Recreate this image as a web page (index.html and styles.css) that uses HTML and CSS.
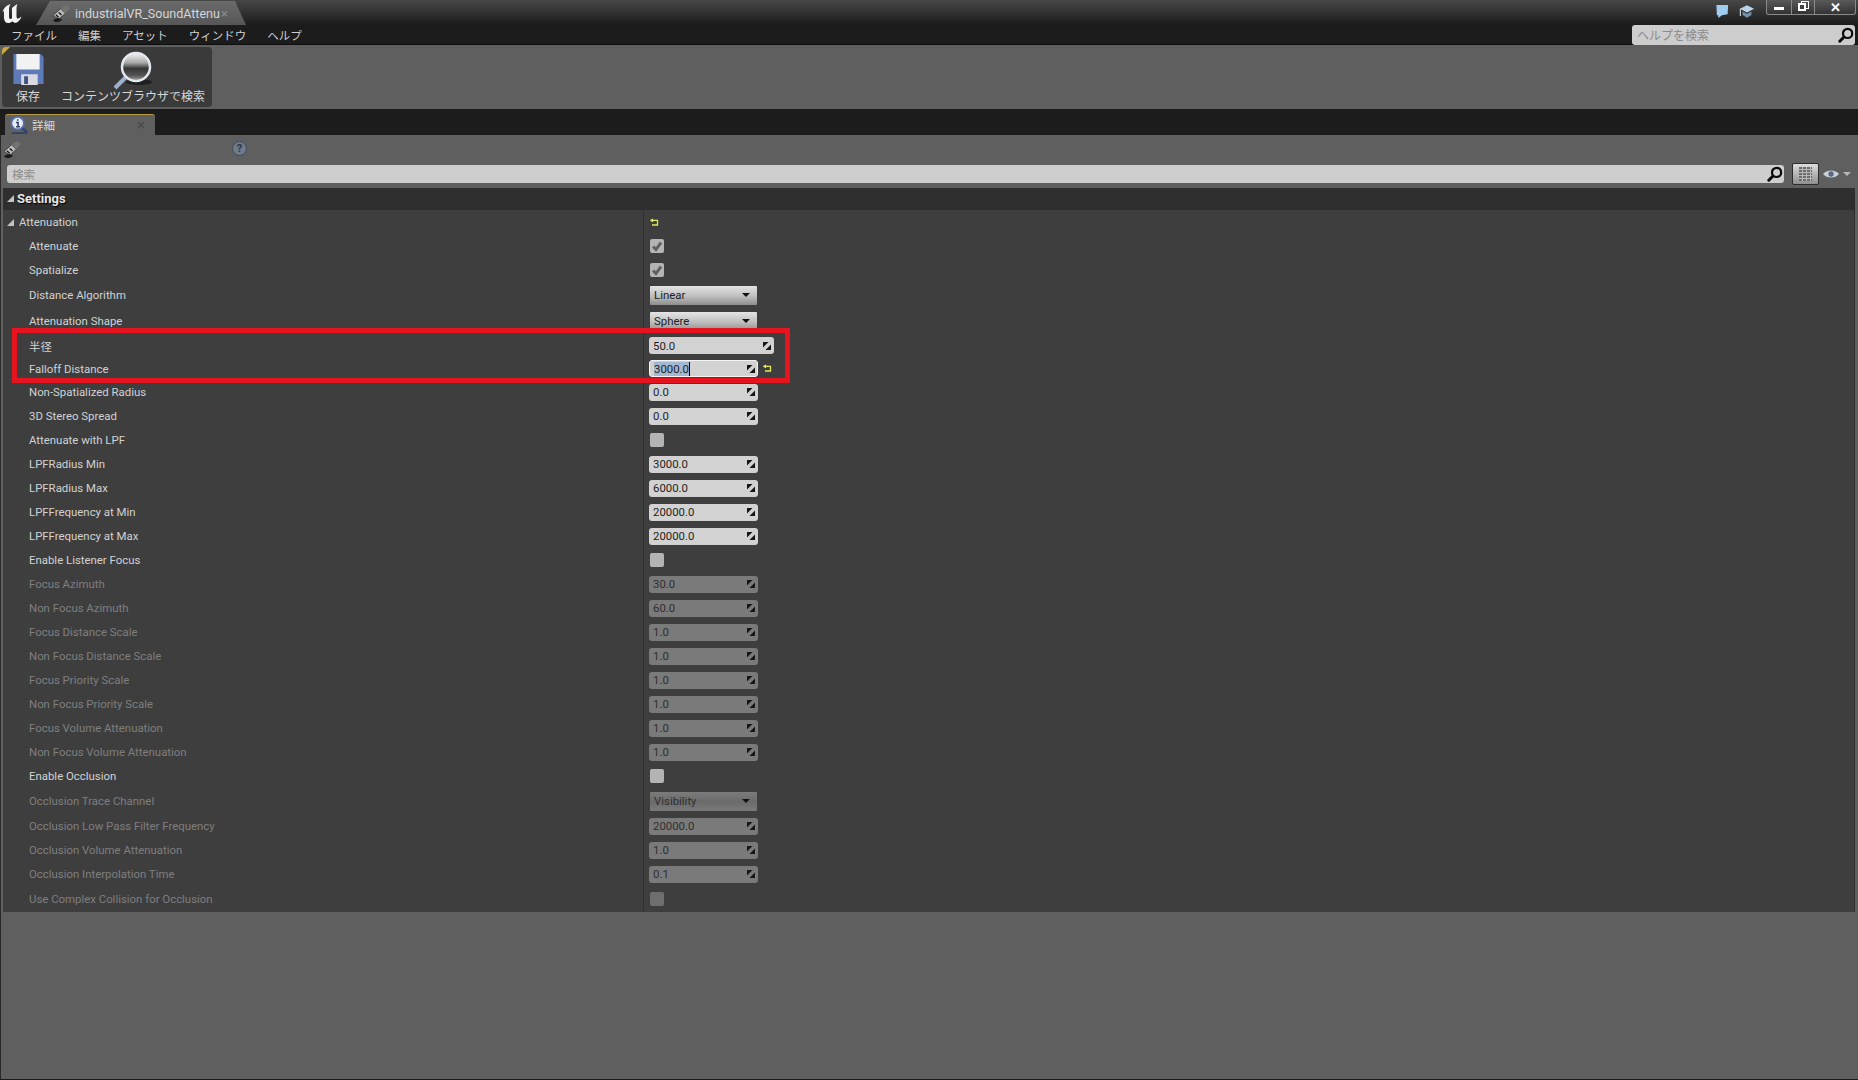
FILE: index.html
```html
<!DOCTYPE html>
<html lang="ja">
<head>
<meta charset="utf-8">
<title>industrialVR_SoundAttenuation</title>
<link rel="stylesheet" href="styles.css">
</head>
<body>
<svg class="defs" width="0" height="0" aria-hidden="true">
  <defs>
    <linearGradient id="glass" x1="0" y1="0" x2="0" y2="1"><stop offset="0" stop-color="#f4f4f4"/><stop offset=".35" stop-color="#a8a8a8"/><stop offset=".55" stop-color="#353535"/><stop offset=".8" stop-color="#555"/><stop offset="1" stop-color="#a4a4a4"/></linearGradient>
    <symbol id="i-arrows" viewBox="0 0 9 9"><path d="M0 0H6.200L0 6.200ZM9 9H2.800L9 2.800Z" fill="#161616"/></symbol>
    <symbol id="i-reset" viewBox="0 0 9 8"><path d="M3 1 1 2.400 3 3.800M1.500 2.400H7.500V7H2" fill="none" stroke="#e6e65a" stroke-width="1.300"/></symbol>
    <symbol id="i-tick" viewBox="0 0 14 14"><path d="M3 7.500 6 10.500 11 3.500" fill="none" stroke="#5f5f5f" stroke-width="3"/></symbol>
    <symbol id="i-lens" viewBox="0 0 16 16"><circle cx="9.600" cy="6.400" r="4.600" fill="none" stroke="#0b0b0b" stroke-width="2.200"/><path d="M6 10 1.800 14.200" stroke="#0b0b0b" stroke-width="3" stroke-linecap="round"/></symbol>
    <symbol id="i-sound" viewBox="0 0 18 18"><path d="M0 11 8 4 13 9 6 15z" fill="#bdbdbd" stroke="#2a2a2a" stroke-width=".8"/><path d="M8 4 14 0 18 3 13 9z" fill="#737373"/><path d="M3 10.500 6 13M6 8 9 10.500" stroke="#1c1c1c" stroke-width="1.500"/><path d="M0 16 5 13.500 10 15.500 6 18H2z" fill="#1a1a1a"/></symbol>
  </defs>
</svg>
<div class="window">
  <header class="titlebar">
    <svg class="logo" viewBox="0 0 22 22" aria-hidden="true"><path d="M1 10C2 6 5 3.500 9 2 7.500 4.500 7.500 6 7.500 8V15C7.500 17 9 17.500 10.500 16.500V6C12 4.500 13.500 3.500 16 2 15 4 15 6 15 8V14C15 16 15.500 17.500 18 16L20 14.500C19 18 16 21 13.500 21 12.500 20 11.500 19.500 10.500 19.500 9 20.500 8 21 6.500 21 4 21 2.500 19 2.500 15.500V10C2.500 9 1.500 9 1 10Z" fill="#f4f4f4"/></svg>
    <div class="doc-tab">
      <svg class="tab-icon"><use href="#i-sound"/></svg>
      <span class="doc-name">industrialVR_SoundAttenu</span>
      <span class="close-x">×</span>
    </div>
    <div class="title-right">
      <svg class="hint-icon" viewBox="0 0 16 16" aria-hidden="true"><path d="M2 1H14.500L14 11 8 12 4 15V12H2.500z" fill="#9fcdef"/></svg>
      <svg class="hint-icon" viewBox="0 0 18 16" aria-hidden="true"><path d="M1 5 9 1 17 5 9 9z" fill="#b9d3e8"/><path d="M4 8V12L9 15 14 12V8L9 10.500z" fill="#7391ab"/><path d="M1.500 5V13" stroke="#ddd" stroke-width="1.200"/></svg>
      <div class="win-buttons">
        <span class="win-btn win-min"><span class="min-bar"></span></span>
        <span class="win-btn win-max"><span class="max-back"></span><span class="max-front"></span></span>
        <span class="win-btn win-close">✕</span>
      </div>
    </div>
  </header>

  <nav class="menubar">
    <span class="menu-item">ファイル</span>
    <span class="menu-item">編集</span>
    <span class="menu-item">アセット</span>
    <span class="menu-item">ウィンドウ</span>
    <span class="menu-item">ヘルプ</span>
    <div class="help-search">
      <span class="help-text">ヘルプを検索</span>
      <svg class="lens"><use href="#i-lens"/></svg>
    </div>
  </nav>

  <section class="toolbar">
    <div class="tool-panel">
      <span class="corner"></span>
      <div class="tool tool-save">
        <svg class="save-icon" viewBox="0 0 32 34" aria-hidden="true"><path d="M1 1H29L32 4V32H1z" fill="#5f7ab8"/><path d="M4 1H28V17H4z" fill="#f2f2f2"/><path d="M9 22H26V33H9z" fill="#d9d9e2"/><path d="M12 24H16V32H12z" fill="#3d5384"/></svg>
        <span class="tool-label">保存</span>
      </div>
      <div class="tool tool-find">
        <svg class="find-icon" viewBox="0 0 42 41" aria-hidden="true"><ellipse cx="27" cy="33" rx="13" ry="3" fill="#1f1f1f"/><path d="M14 28 3 39" stroke="#9fb0cc" stroke-width="4"/><circle cx="24" cy="18" r="14" fill="url(#glass)" stroke="#e4e8f0" stroke-width="2.500"/></svg>
        <span class="tool-label">コンテンツブラウザで検索</span>
      </div>
    </div>
  </section>

  <div class="tabstrip">
    <div class="detail-tab">
      <svg class="info-icon" viewBox="0 0 20 20" aria-hidden="true"><path d="M13 13 19 18" stroke="#2f4478" stroke-width="3"/><path d="M2 19H19" stroke="#263a66" stroke-width="1.500"/><circle cx="8.500" cy="8" r="7" fill="#e7ebf4" stroke="#5870ab" stroke-width="2"/><path d="M8.500 3.500V5.200M6.800 7.300H9V11.500M6.800 12H11" stroke="#26355c" stroke-width="1.600" fill="none"/></svg>
      <span class="detail-name">詳細</span>
      <span class="close-x dim">×</span>
    </div>
  </div>

  <main class="details">
    <div class="object-bar">
      <svg class="object-icon"><use href="#i-sound"/></svg>
      <span class="help-dot">?</span>
    </div>
    <div class="search-bar">
      <div class="search-box">
        <span class="search-text">検索</span>
        <svg class="lens"><use href="#i-lens"/></svg>
      </div>
      <span class="grid-btn"><span class="grid-glyph"></span></span>
      <svg class="eye" viewBox="0 0 18 10" aria-hidden="true"><path d="M0 5C4 0 13 0 17 5 13 10 4 10 0 5Z" fill="#c8d0d8"/><circle cx="8.500" cy="5" r="2.800" fill="#5b6786"/></svg>
      <span class="eye-arrow"></span>
    </div>

    <section class="settings">
      <div class="section-head"><span class="tri"></span><span class="section-title">Settings</span></div>

      <div class="row h24 group"><span class="name"><span class="tri small"></span>Attenuation</span><span class="val"><svg class="reset"><use href="#i-reset"/></svg></span></div>
      <div class="row h24"><span class="name">Attenuate</span><span class="val"><span class="check"><svg><use href="#i-tick"/></svg></span></span></div>
      <div class="row h24"><span class="name">Spatialize</span><span class="val"><span class="check"><svg><use href="#i-tick"/></svg></span></span></div>
      <div class="row h26"><span class="name">Distance Algorithm</span><span class="val"><span class="combo"><span>Linear</span><i></i></span></span></div>
      <div class="row h26"><span class="name">Attenuation Shape</span><span class="val"><span class="combo"><span>Sphere</span><i></i></span></span></div>
      <div class="row h23"><span class="name">半径</span><span class="val"><span class="num wide"><span>50.0</span><svg><use href="#i-arrows"/></svg></span></span></div>
      <div class="row h23"><span class="name">Falloff Distance</span><span class="val"><span class="num focus"><span><b>3000.0</b></span><svg><use href="#i-arrows"/></svg></span><svg class="reset side"><use href="#i-reset"/></svg></span></div>
      <div class="row h24"><span class="name">Non-Spatialized Radius</span><span class="val"><span class="num"><span>0.0</span><svg><use href="#i-arrows"/></svg></span></span></div>
      <div class="row h24"><span class="name">3D Stereo Spread</span><span class="val"><span class="num"><span>0.0</span><svg><use href="#i-arrows"/></svg></span></span></div>
      <div class="row h24"><span class="name">Attenuate with LPF</span><span class="val"><span class="check"></span></span></div>
      <div class="row h24"><span class="name">LPFRadius Min</span><span class="val"><span class="num"><span>3000.0</span><svg><use href="#i-arrows"/></svg></span></span></div>
      <div class="row h24"><span class="name">LPFRadius Max</span><span class="val"><span class="num"><span>6000.0</span><svg><use href="#i-arrows"/></svg></span></span></div>
      <div class="row h24"><span class="name">LPFFrequency at Min</span><span class="val"><span class="num"><span>20000.0</span><svg><use href="#i-arrows"/></svg></span></span></div>
      <div class="row h24"><span class="name">LPFFrequency at Max</span><span class="val"><span class="num"><span>20000.0</span><svg><use href="#i-arrows"/></svg></span></span></div>
      <div class="row h24"><span class="name">Enable Listener Focus</span><span class="val"><span class="check"></span></span></div>
      <div class="row h24 off"><span class="name">Focus Azimuth</span><span class="val"><span class="num"><span>30.0</span><svg><use href="#i-arrows"/></svg></span></span></div>
      <div class="row h24 off"><span class="name">Non Focus Azimuth</span><span class="val"><span class="num"><span>60.0</span><svg><use href="#i-arrows"/></svg></span></span></div>
      <div class="row h24 off"><span class="name">Focus Distance Scale</span><span class="val"><span class="num"><span>1.0</span><svg><use href="#i-arrows"/></svg></span></span></div>
      <div class="row h24 off"><span class="name">Non Focus Distance Scale</span><span class="val"><span class="num"><span>1.0</span><svg><use href="#i-arrows"/></svg></span></span></div>
      <div class="row h24 off"><span class="name">Focus Priority Scale</span><span class="val"><span class="num"><span>1.0</span><svg><use href="#i-arrows"/></svg></span></span></div>
      <div class="row h24 off"><span class="name">Non Focus Priority Scale</span><span class="val"><span class="num"><span>1.0</span><svg><use href="#i-arrows"/></svg></span></span></div>
      <div class="row h24 off"><span class="name">Focus Volume Attenuation</span><span class="val"><span class="num"><span>1.0</span><svg><use href="#i-arrows"/></svg></span></span></div>
      <div class="row h24 off"><span class="name">Non Focus Volume Attenuation</span><span class="val"><span class="num"><span>1.0</span><svg><use href="#i-arrows"/></svg></span></span></div>
      <div class="row h24"><span class="name">Enable Occlusion</span><span class="val"><span class="check"></span></span></div>
      <div class="row h26 off"><span class="name">Occlusion Trace Channel</span><span class="val"><span class="combo"><span>Visibility</span><i></i></span></span></div>
      <div class="row h24 off"><span class="name">Occlusion Low Pass Filter Frequency</span><span class="val"><span class="num"><span>20000.0</span><svg><use href="#i-arrows"/></svg></span></span></div>
      <div class="row h24 off"><span class="name">Occlusion Volume Attenuation</span><span class="val"><span class="num"><span>1.0</span><svg><use href="#i-arrows"/></svg></span></span></div>
      <div class="row h24 off"><span class="name">Occlusion Interpolation Time</span><span class="val"><span class="num"><span>0.1</span><svg><use href="#i-arrows"/></svg></span></span></div>
      <div class="row h25 off"><span class="name">Use Complex Collision for Occlusion</span><span class="val"><span class="check"></span></span></div>
    </section>
  </main>
  <div class="highlight"></div>
</div>
</body>
</html>
```

FILE: styles.css
```css
* { box-sizing: border-box; }
html, body { margin: 0; height: 100%; }
body {
  font-family: Roboto, "Noto Sans CJK JP", sans-serif;
  background: #5f5f5f;
  overflow: hidden;
}
.defs { position: absolute; }
.window {
  position: relative;
  width: 1858px;
  height: 1080px;
  display: flex;
  flex-direction: column;
  border-bottom: 1px solid #1a1a1a;
}

/* title bar */
.titlebar {
  height: 25px;
  flex: none;
  display: flex;
  align-items: flex-end;
  background: linear-gradient(#474747, #1b1b1b);
}
.logo { width: 23px; height: 22px; margin: 0 12px 0 1px; align-self: center; }
.doc-tab {
  width: 210px;
  height: 24px;
  display: flex;
  align-items: center;
  padding-left: 17px;
  background: linear-gradient(#6b6b6b, #565656);
  clip-path: polygon(14px 0, 199px 0, 210px 100%, 0 100%);
  color: #d6d6d6;
  font-size: 12.500px;
}
.tab-icon { width: 17px; height: 17px; margin-right: 5px; flex: none; }
.doc-name { white-space: nowrap; }
.close-x { font-size: 13px; color: #8c8c8c; margin-left: auto; margin-right: 18px; }
.close-x.dim { margin-right: 10px; color: #4a4a4a; font-size: 15px; }
.title-right {
  margin-left: auto;
  display: flex;
  align-items: flex-start;
  align-self: flex-start;
  padding-right: 2px;
}
.hint-icon { width: 16px; height: 15px; margin: 4px 9px 0 0; }
.hint-icon + .hint-icon { margin-right: 11px; }
.win-buttons { display: flex; }
.win-btn {
  height: 15px;
  display: flex;
  align-items: center;
  justify-content: center;
  position: relative;
  background: linear-gradient(#5a5a5a, #333);
  border: 1px solid #8a8a8a;
  border-top: 0;
  color: #fff;
}
.win-min { width: 26px; border-radius: 0 0 0 3px; }
.win-max { width: 23px; border-left: 0; }
.win-close { width: 41px; border-left: 0; font-size: 13px; font-weight: 700; border-radius: 0 0 3px 0; }
.min-bar { width: 10px; height: 3px; background: #fff; margin-top: 2px; }
.max-back, .max-front { position: absolute; border: 2px solid #fff; }
.max-back { width: 8px; height: 8px; left: 9px; top: 1px; border-width: 1px; }
.max-front { width: 8px; height: 8px; left: 6px; top: 3px; background: #3f3f3f; }

/* menu */
.menubar {
  height: 20px;
  flex: none;
  display: flex;
  align-items: center;
  gap: 21px;
  padding: 0 3px 0 11px;
  background: #1c1c1c;
  border-bottom: 1px solid #0d0d0d;
  color: #cfcfcf;
  font-size: 11.500px;
}
.menu-item { white-space: nowrap; }
.help-search {
  margin-left: auto;
  width: 223px;
  height: 20px;
  display: flex;
  align-items: center;
  justify-content: space-between;
  padding: 0 1px 0 5px;
  background: #cdcdcd;
  border-radius: 3px;
  color: #8b8b8b;
  font-size: 12px;
}
.lens { width: 16px; height: 16px; flex: none; }

/* toolbar */
.toolbar {
  height: 64px;
  flex: none;
  padding: 2px 0 1px 2px;
  background: #5f5f5f;
}
.tool-panel {
  position: relative;
  width: 210px;
  height: 60px;
  display: flex;
  background: #3a3a3a;
  border-radius: 4px;
  overflow: hidden;
  color: #d8d8d8;
  font-size: 12px;
}
.corner {
  position: absolute;
  left: 0;
  top: 0;
  border-style: solid;
  border-width: 8px 8px 0 0;
  border-color: #c9a93e transparent transparent transparent;
}
.tool { display: flex; flex-direction: column; align-items: center; }
.tool-save { width: 50px; padding-top: 6px; padding-left: 2px; }
.tool-find { width: 146px; padding-top: 2px; margin-left: 8px; }
.save-icon { width: 32px; height: 33px; }
.find-icon { width: 42px; height: 41px; }
.tool-save .tool-label { margin-top: 4px; }
.tool-label { white-space: nowrap; line-height: 15px; }

/* tab strip */
.tabstrip {
  height: 26px;
  flex: none;
  padding: 5px 0 0 5px;
  background: #1c1c1c;
}
.detail-tab {
  width: 150px;
  height: 21px;
  display: flex;
  align-items: center;
  padding: 0 0 1px 5px;
  background: #5f5f5f;
  border-top: 1px solid #b59b45;
  border-radius: 3px 3px 0 0;
  color: #d8d8d8;
  font-size: 11.500px;
}
.info-icon { width: 18px; height: 18px; margin-right: 4px; flex: none; }

/* details */
.details {
  flex: 1;
  display: flex;
  flex-direction: column;
  padding: 0 3px 0 2px;
  background: #5f5f5f;
  border-left: 1px solid #2a2a2a;
}
.object-bar {
  height: 30px;
  flex: none;
  display: flex;
  align-items: flex-start;
  padding: 6px 0 0 1px;
}
.object-icon { width: 17px; height: 17px; }
.help-dot {
  margin-left: 211px;
  width: 15px;
  height: 15px;
  border-radius: 50%;
  background: #6d7a8a;
  border: 1px solid #3f4a58;
  color: #2c3440;
  font-size: 11px;
  font-weight: 700;
  line-height: 13px;
  text-align: center;
}
.search-bar {
  height: 18px;
  flex: none;
  display: flex;
  align-items: center;
  padding-left: 4px;
}
.search-box {
  width: 1777px;
  height: 18px;
  display: flex;
  align-items: center;
  justify-content: space-between;
  padding: 0 1px 0 5px;
  background: #cecece;
  border-radius: 3px;
  color: #8c8c8c;
  font-size: 11.500px;
}
.grid-btn {
  width: 27px;
  height: 22px;
  margin-left: 8px;
  display: flex;
  align-items: center;
  justify-content: center;
  background: linear-gradient(#dcdcdc, #8f8f8f);
  border: 1px solid #2d2d2d;
  border-radius: 2px;
  flex: none;
}
.grid-glyph {
  width: 13px;
  height: 14px;
  background:
    repeating-linear-gradient(transparent 0 2px, #b8b8b8 2px 3px),
    repeating-linear-gradient(90deg, transparent 0 3px, #b8b8b8 3px 4px),
    #6c6c6c;
}
.eye { width: 17px; height: 10px; margin-left: 4px; flex: none; }
.eye-arrow {
  margin-left: 3px;
  border-style: solid;
  border-width: 4px 4px 0;
  border-color: #b8b8b8 transparent transparent;
}

/* settings table */
.settings {
  margin-top: 5px;
  width: 1852px;
  height: 724px;
  flex: none;
  background: #3e3e3e;
  border-right: 1px solid #2c2c2c;
}
.section-head {
  height: 22px;
  display: flex;
  align-items: center;
  padding: 0 0 1px 4px;
  background: #2f2f2f;
  color: #e6e6e6;
  font-size: 13px;
  font-weight: 700;
  text-shadow: 1px 1px 1px #000;
}
.tri {
  width: 0;
  height: 0;
  margin-right: 3px;
  border-style: solid;
  border-width: 0 0 7px 7px;
  border-color: transparent transparent #c4c4c4 transparent;
}
.tri.small { margin-right: 5px; }
.row {
  display: flex;
  align-items: center;
  color: #d2d2d2;
  font-size: 11.400px;
}
.h23 { height: 23px; }
.h24 { height: 24px; }
.h25 { height: 25px; }
.h26 { height: 26px; }
.name {
  width: 641px;
  height: 100%;
  flex: none;
  display: flex;
  align-items: center;
  padding-left: 26px;
  border-right: 1px solid #2f2f2f;
  white-space: nowrap;
}
.group .name { padding-left: 4px; }
.val {
  flex: 1;
  height: 100%;
  display: flex;
  align-items: center;
  padding-left: 5px;
}
.off { color: #7e7e7e; }
.reset { width: 9px; height: 8px; margin: 0 0 1px 1px; flex: none; }
.reset.side { margin-left: 5px; }
.check {
  width: 14px;
  height: 14px;
  margin-left: 1px;
  background: #b4b4b4;
  border-radius: 2px;
  flex: none;
}
.check svg { display: block; width: 14px; height: 14px; }
.off .check { background: #6e6e6e; }
.combo {
  width: 107px;
  height: 19px;
  margin-left: 1px;
  display: flex;
  align-items: center;
  justify-content: space-between;
  padding: 0 7px 0 4px;
  background: linear-gradient(#e4e4e4, #bdbdbd 55%, #8e8e8e);
  border-radius: 1px;
  color: #1e1e1e;
}
.combo i {
  border-style: solid;
  border-width: 4px 4px 0;
  border-color: #111 transparent transparent;
}
.off .combo { background: linear-gradient(#7c7c7c, #6b6b6b 50%, #7a7a7a); color: #2f2f2f; }
.num {
  width: 109px;
  height: 17px;
  display: flex;
  align-items: center;
  justify-content: space-between;
  padding: 0 2px 0 4px;
  background: #d2d2d2;
  border-radius: 3px;
  color: #1e1e1e;
}
.num svg { width: 8px; height: 8px; margin-right: 1px; flex: none; }
.num.wide { width: 125px; }
.off .num { background: #7a7a7a; color: #2f2f2f; }
.num.focus { background: #d2d2d2; border: 1px solid #f4f4f4; padding: 0 1px 0 4px; }
.num.focus b {
  font-weight: 400;
  background: #a3b8d2;
  border-right: 1px solid #000;
}

/* annotation */
.highlight {
  position: absolute;
  left: 12px;
  top: 328px;
  width: 778px;
  height: 55px;
  border: 5px solid #e5141f;
  pointer-events: none;
}
```
